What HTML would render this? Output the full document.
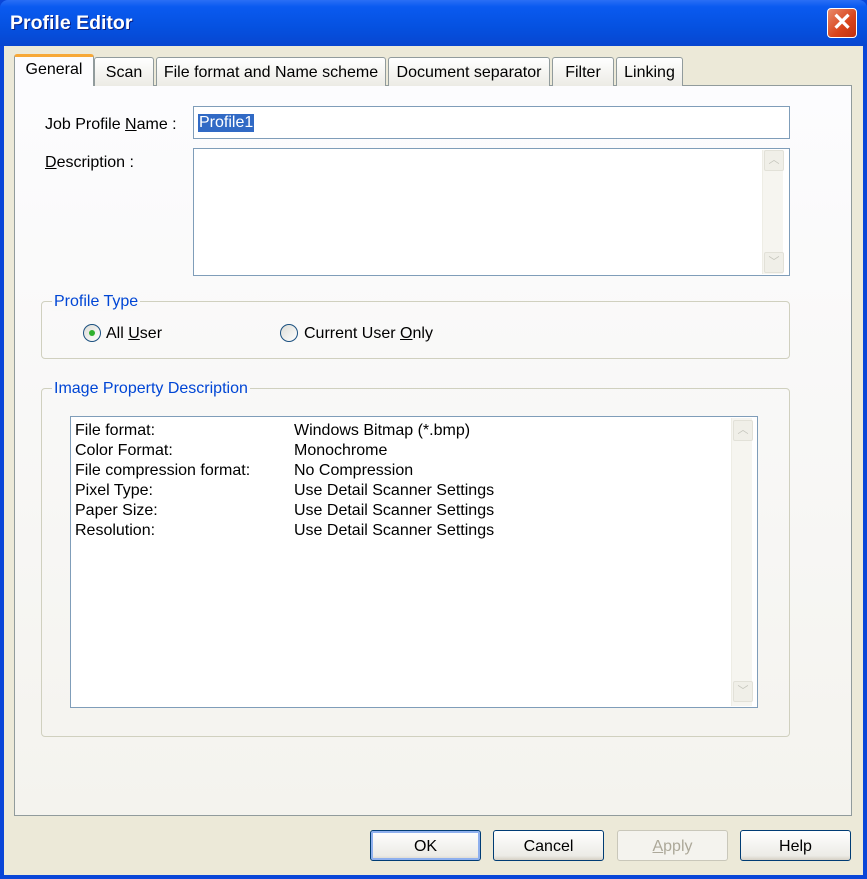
<!DOCTYPE html>
<html><head><meta charset="utf-8"><style>
*{box-sizing:border-box;margin:0;padding:0}
body{width:867px;height:879px;overflow:hidden;font-family:"Liberation Sans",sans-serif;font-size:16px;color:#000;background:#0a46d8;position:relative}
.abs{position:absolute}
#title{left:0;top:0;width:867px;height:46px;background:linear-gradient(#2a6ef5 0%,#0a5af0 15%,#0551e0 60%,#0846d0 100%);border-radius:8px 8px 0 0}
#title span{position:absolute;left:10px;top:12px;color:#fff;font-weight:bold;font-size:19.5px;text-shadow:1px 1px #0a1e80}
#close{left:827px;top:8px;width:30px;height:30px;border:1px solid #fff;border-radius:4px;background:linear-gradient(135deg,#e88a6a,#d8431a 60%,#c03010);color:#fff;font-size:24px;text-align:center;line-height:28px;font-weight:bold}
#body{left:4px;top:46px;width:859px;height:829px;background:#ece9d8}
#panel{left:14px;top:85px;width:838px;height:731px;background:linear-gradient(#fcfcfe,#f4f3ee);border:1px solid #919b9c}
.tab{position:absolute;top:57px;height:29px;border:1px solid #919b9c;border-bottom:none;border-radius:3px 3px 0 0;background:linear-gradient(#fff,#ecebe5);padding:6px 0 0;text-align:center}
.tab.sel{top:54px;height:32px;background:#fcfcfe;border-top:3px solid #f7a837;padding-top:4px}
.inp{position:absolute;background:#fff;border:1px solid #7f9db9}
.grp{position:absolute;border:1px solid #d0d0bf;border-radius:4px}
.leg{position:absolute;background:#f9f9f8;color:#0046d5;padding:0 2px}
.sb{position:absolute;width:21px;background:#f6f5f0;border-left:1px solid #eeede5}
.sbb{position:absolute;left:1px;width:20px;height:21px;background:#f0efe8;border:1px solid #e2e1d8;border-radius:2px;color:#c5c5bc;font-size:11px;text-align:center;line-height:19px}
.btn{position:absolute;top:830px;width:111px;height:31px;border:1px solid #003c74;border-radius:3px;background:linear-gradient(#fff,#ecebe6 85%,#d6d0c5);text-align:center;line-height:31px}
.radio{position:absolute;width:18px;height:18px;border-radius:50%;border:1px solid #1c5180;background:linear-gradient(135deg,#dcdcd6,#fff)}
u{text-decoration:underline}
.row{position:absolute;left:75px;white-space:nowrap}
</style></head><body>
<div id="title" class="abs"><span>Profile Editor</span></div>
<div id="close" class="abs">✕</div>
<div id="body" class="abs"></div>
<div id="panel" class="abs"></div>
<div class="tab sel" style="left:14px;width:80px">General</div>
<div class="tab" style="left:94px;width:60px">Scan</div>
<div class="tab" style="left:156px;width:230px">File format and Name scheme</div>
<div class="tab" style="left:388px;width:162px">Document separator</div>
<div class="tab" style="left:552px;width:62px">Filter</div>
<div class="tab" style="left:616px;width:67px">Linking</div>

<div class="abs" style="left:45px;top:116px">Job Profile <u>N</u>ame :</div>
<div class="inp" style="left:193px;top:106px;width:597px;height:33px"><span style="position:absolute;left:4px;top:7px;background:#316ac5;color:#fff;padding:0 1px">Profile1</span></div>
<div class="abs" style="left:45px;top:154px"><u>D</u>escription :</div>
<div class="inp" style="left:193px;top:148px;width:597px;height:128px">
<div class="sb" style="left:568px;top:1px;height:124px"><div class="sbb" style="top:0">︿</div><div class="sbb" style="top:102px">﹀</div></div></div>

<div class="grp" style="left:41px;top:301px;width:749px;height:58px"></div>
<div class="leg" style="left:52px;top:293px">Profile Type</div>
<div class="radio" style="left:83px;top:324px"><div style="position:absolute;left:5px;top:5px;width:6px;height:6px;border-radius:50%;background:#2eb02e"></div></div>
<div class="abs" style="left:106px;top:325px">All <u>U</u>ser</div>
<div class="radio" style="left:280px;top:324px"></div>
<div class="abs" style="left:304px;top:325px">Current User <u>O</u>nly</div>

<div class="grp" style="left:41px;top:388px;width:749px;height:349px"></div>
<div class="leg" style="left:52px;top:380px">Image Property Description</div>
<div class="inp" style="left:70px;top:416px;width:688px;height:292px">
<div class="sb" style="left:660px;top:1px;height:288px"><div class="sbb" style="top:2px">︿</div><div class="sbb" style="top:263px">﹀</div></div></div>
<div class="row" style="top:422px">File format:</div><div class="abs" style="left:294px;top:422px">Windows Bitmap (*.bmp)</div>
<div class="row" style="top:442px">Color Format:</div><div class="abs" style="left:294px;top:442px">Monochrome</div>
<div class="row" style="top:462px">File compression format:</div><div class="abs" style="left:294px;top:462px">No Compression</div>
<div class="row" style="top:482px">Pixel Type:</div><div class="abs" style="left:294px;top:482px">Use Detail Scanner Settings</div>
<div class="row" style="top:502px">Paper Size:</div><div class="abs" style="left:294px;top:502px">Use Detail Scanner Settings</div>
<div class="row" style="top:522px">Resolution:</div><div class="abs" style="left:294px;top:522px">Use Detail Scanner Settings</div>

<div class="btn" style="left:370px;box-shadow:inset 0 0 0 2px #8fb0ee">OK</div>
<div class="btn" style="left:493px">Cancel</div>
<div class="btn" style="left:617px;border-color:#c9c7ba;background:#f4f3ee;color:#aca899"><u>A</u>pply</div>
<div class="btn" style="left:740px">Help</div>
</body></html>
